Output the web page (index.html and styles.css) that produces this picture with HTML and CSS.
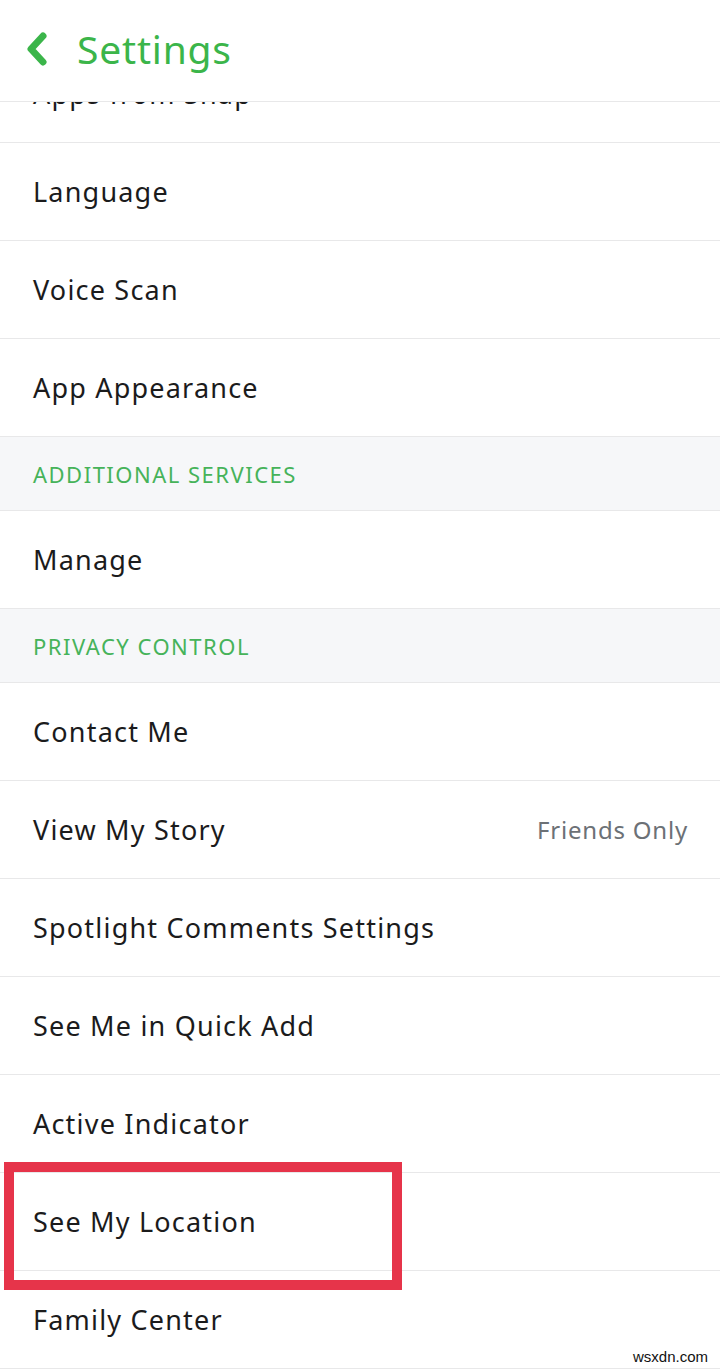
FILE: index.html
```html
<!DOCTYPE HTML>
<html lang='en'>
<head>
<meta charset='utf-8'>
<title>Settings</title>
<link rel="stylesheet" href="styles.css">
</head>
<body>
<!--page starts here-->
<div class='page'>
<!--header starts here-->
<div class='header'>
<svg class='back_icon' width='22' height='34' viewBox='0 0 22 34'>
<path d='M17 4 L5 17 L17 30' fill='none' stroke='#3bb54a' stroke-width='7' stroke-linecap='round' stroke-linejoin='round'/>
</svg>
<span class='title'>Settings</span>
</div>
<!--header ends here-->
<!--list starts here-->
<div class='list'>
<div class='row first'>Apps from Snap</div>
<div class='row'>Language</div>
<div class='row'>Voice Scan</div>
<div class='row'>App Appearance</div>
<div class='section'>ADDITIONAL SERVICES</div>
<div class='row'>Manage</div>
<div class='section'>PRIVACY CONTROL</div>
<div class='row'>Contact Me</div>
<div class='row'>View My Story<span class='value'>Friends Only</span></div>
<div class='row'>Spotlight Comments Settings</div>
<div class='row'>See Me in Quick Add</div>
<div class='row'>Active Indicator</div>
<div class='row'>See My Location</div>
<div class='row'>Family Center</div>
</div>
<!--list ends here-->
<div class='highlight'></div>
<div class='watermark'>wsxdn.com</div>
</div>
<!--page ends here-->
</body>
</html>
```

FILE: styles.css
```css
html,body
{
margin:0;
padding:0;
background:#ffffff;
}
.page
{
position:relative;
width:720px;
height:1371px;
overflow:hidden;
font-family:"Noto Sans",Lato,sans-serif;
}
.header
{
display:flex;
align-items:center;
padding-left:26px;
border-bottom:1px solid #e8e8e9;
background:#ffffff;
position:relative;
z-index:1;
box-sizing:border-box;
height:102px;
}
.back_icon
{
margin-top:-4px;
}
.title
{
margin-left:29px;
font-size:39px;
letter-spacing:0.8px;
color:#3bb54a;
margin-top:-4px;
}
.list
{
overflow:hidden;
}
.row
{
height:97px;
border-bottom:1px solid #e8e8e9;
display:flex;
align-items:center;
justify-content:space-between;
padding:0 32px 0 33px;
font-size:27px;
letter-spacing:1.2px;
color:#1b1b1c;
}
.first
{
margin-top:-57px;
}
.value
{
font-size:24px;
letter-spacing:0.8px;
color:#6c7176;
}
.section
{
height:73px;
border-bottom:1px solid #e8e8e9;
background:#f6f7f9;
display:flex;
align-items:center;
padding-left:33px;
font-size:22px;
letter-spacing:1.5px;
color:#46b35a;
}
.highlight
{
position:absolute;
left:4px;
top:1162px;
width:378px;
height:108px;
border:10px solid #e6344a;
}
.watermark
{
position:absolute;
right:12px;
bottom:6px;
font-family:"Liberation Sans",sans-serif;
font-size:15px;
color:#111111;
}
```
